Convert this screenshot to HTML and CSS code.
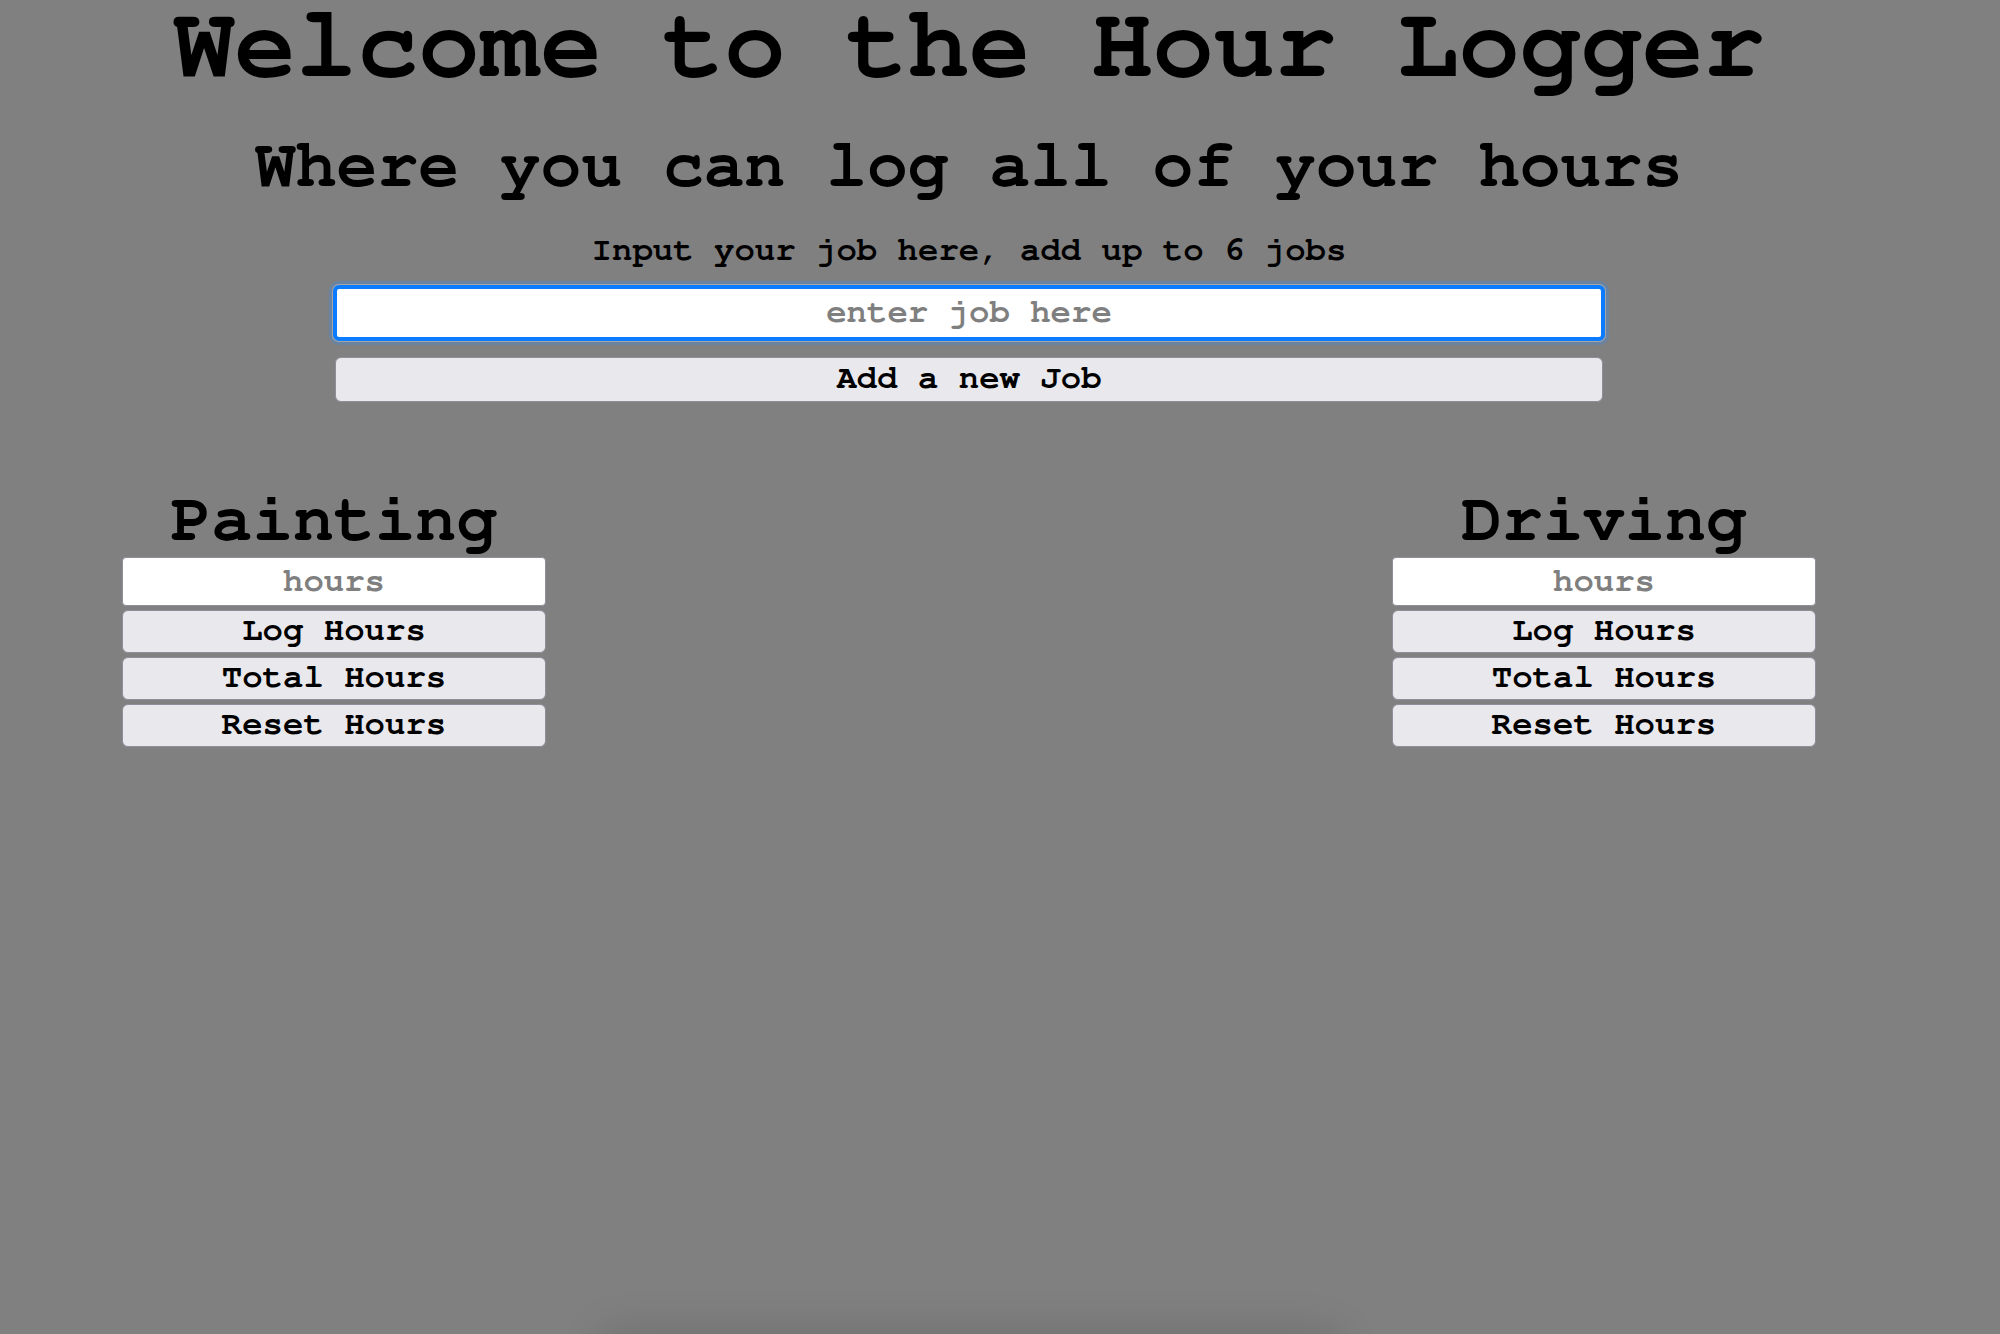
FILE: index.html
```html
<!DOCTYPE html>
<html lang="en">
<head>
<meta charset="utf-8">
<title>Hour Logger</title>
<link rel="stylesheet" href="styles.css">
</head>
<body>
<div class="page">
  <header class="intro">
    <h1 class="title">Welcome to the Hour Logger</h1>
    <h2 class="subtitle">Where you can log all of your hours</h2>
    <p class="hint">Input your job here, add up to 6 jobs</p>
    <input class="job-input" type="text" placeholder="enter job here">
    <button class="add-btn" type="button">Add a new Job</button>
  </header>
  <section class="jobs">
    <div class="job">
      <h3 class="job-name">Painting</h3>
      <input class="hours-input" type="text" placeholder="hours">
      <button class="job-btn" type="button">Log Hours</button>
      <button class="job-btn" type="button">Total Hours</button>
      <button class="job-btn" type="button">Reset Hours</button>
    </div>
    <div class="job">
      <h3 class="job-name">Driving</h3>
      <input class="hours-input" type="text" placeholder="hours">
      <button class="job-btn" type="button">Log Hours</button>
      <button class="job-btn" type="button">Total Hours</button>
      <button class="job-btn" type="button">Reset Hours</button>
    </div>
  </section>
</div>
<div class="bottom-shadow"></div>
</body>
</html>
```
FILE: styles.css
```css
html, body {
  margin: 0;
  padding: 0;
  background: #808080;
}

body {
  min-height: 1334px;
  font-family: "Nimbus Mono PS", "Nimbus Mono L", "FreeMono", "Courier New", "Liberation Mono", monospace;
  font-weight: bold;
  color: #000;
  overflow: hidden;
}

.page {
  width: 1938px;
}

.intro {
  display: flex;
  flex-direction: column;
  align-items: center;
}

.title {
  margin: 0;
  font-size: 102px;
  line-height: 90px;
  font-weight: bold;
  white-space: nowrap;
}

.subtitle {
  margin: 42px 0 0;
  font-size: 68px;
  line-height: 68px;
  font-weight: bold;
  white-space: nowrap;
}

.hint {
  margin: 33px 0 0;
  font-size: 34px;
  line-height: 34px;
  white-space: nowrap;
}

.job-input {
  box-sizing: border-box;
  margin: 18px 0 0;
  width: 1272px;
  height: 56px;
  border: 4px solid #0b7bff;
  border-radius: 6px;
  background: #fff;
  box-shadow: 0 0 0 1px #a6a6a6, 0 0 1px 4px rgba(85, 135, 190, 0.55);
  outline: none;
  padding: 0 0 2px;
  font-family: inherit;
  font-weight: bold;
  font-size: 34px;
  text-align: center;
  color: #000;
}

.job-input::placeholder,
.hours-input::placeholder {
  color: #7f7f7f;
  opacity: 1;
}

.add-btn,
.job-btn {
  box-sizing: border-box;
  margin: 0;
  padding: 0 0 4px;
  border: 1px solid #908e9a;
  border-radius: 6px;
  background: #e9e8ed;
  font-family: inherit;
  font-weight: bold;
  font-size: 34px;
  color: #000;
  line-height: 1;
}

.add-btn {
  margin-top: 16px;
  width: 1268px;
  height: 45px;
}

.jobs {
  width: 1694px;
  margin: 84px auto 0;
  display: flex;
  justify-content: space-between;
  align-items: flex-start;
}

.job {
  width: 424px;
  display: flex;
  flex-direction: column;
  gap: 4px;
}

.job-name {
  margin: 0 0 -1px;
  text-align: center;
  font-size: 68px;
  line-height: 68px;
  font-weight: bold;
}

.hours-input {
  box-sizing: border-box;
  margin: 0;
  width: 424px;
  height: 49px;
  border: 1px solid #908e9a;
  border-radius: 4px;
  background: #fff;
  padding: 0 0 2px;
  outline: none;
  font-family: inherit;
  font-weight: bold;
  font-size: 34px;
  text-align: center;
  color: #000;
}

.job-btn {
  width: 424px;
  height: 43px;
}

.bottom-shadow {
  position: fixed;
  left: 600px;
  width: 740px;
  bottom: -40px;
  height: 40px;
  border-radius: 20px;
  box-shadow: 0 0 40px 6px rgba(0, 0, 0, 0.12);
}
```
